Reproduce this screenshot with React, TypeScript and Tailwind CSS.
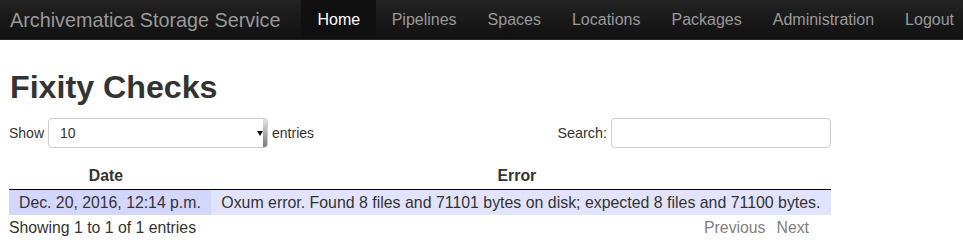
import React from "react";

const navItems = ["Pipelines", "Spaces", "Locations", "Packages", "Administration", "Logout"];

export default function App() {
  return (
    <div className="min-h-[247px] bg-white text-[#333] font-['Liberation_Sans',Arial,sans-serif]">
      <div className="h-[40px] flex items-stretch bg-gradient-to-b from-[#222222] to-[#111111] border-b border-[#252525] whitespace-nowrap overflow-hidden">
        <div className="shrink-0 pl-[10px] pr-[21px] flex items-center text-[19.8px] text-[#999999] leading-[20px] whitespace-nowrap">
          Archivematica Storage Service
        </div>
        <div className="shrink-0 flex items-stretch text-[16px] leading-[20px]">
          <div className="px-[16px] flex items-center bg-[#101010] text-white">Home</div>
          {navItems.map((n) => (
            <div key={n} className="px-[15.5px] flex items-center text-[#999999]">
              {n}
            </div>
          ))}
        </div>
      </div>

      <div className="pl-[9px] w-[840px]">
        <h1 className="mt-[27px] text-[32.2px] leading-[40px] font-bold text-[#333] pl-[1px]">Fixity Checks</h1>

        <div className="mt-[11px] w-[822px] flex items-center justify-between text-[14px] leading-[20px]">
          <div className="flex items-center">
            <span>Show</span>
            <div className="ml-[4px] w-[220px] h-[30px] border border-[#cccccc] rounded-[4px] bg-white flex items-center relative">
              <span className="pl-[11px] text-[14px] text-[#333]">10</span>
              <svg className="absolute left-[208px] top-[12px]" width="6" height="5" viewBox="0 0 6 5">
                <polygon points="0,0 6,0 3,5" fill="#111" />
              </svg>
              <div className="absolute right-0 top-0 bottom-0 w-[4px] bg-gradient-to-b from-[#e6e6e6] to-[#7a7a7a] rounded-r-[3px]" />
            </div>
            <span className="ml-[4px]">entries</span>
          </div>
          <div className="flex items-center">
            <span className="text-[14.4px]">Search:</span>
            <div className="ml-[4px] w-[220px] h-[30px] border border-[#cccccc] rounded-[4px] bg-white" />
          </div>
        </div>

        <table className="mt-[15px] w-[822px] border-collapse text-[15.8px] leading-[19px]">
          <thead>
            <tr className="border-b border-black">
              <th className="w-[201px] pt-[3px] pb-[4px] pl-[10px] pr-[18px] font-bold text-center">Date</th>
              <th className="pt-[3px] pb-[4px] pl-[10px] pr-[18px] font-bold text-center">Error</th>
            </tr>
          </thead>
          <tbody>
            <tr className="bg-[#e2e4ff]">
              <td className="w-[201px] px-[10px] py-[3px] text-center bg-[#d3d6ff] whitespace-nowrap">
                Dec. 20, 2016, 12:14 p.m.
              </td>
              <td className="px-[10px] py-[3px] text-center whitespace-nowrap text-[15.9px]">
                Oxum error. Found 8 files and 71101 bytes on disk; expected 8 files and 71100 bytes.
              </td>
            </tr>
          </tbody>
        </table>

        <div className="w-[822px] flex justify-between text-[15.8px] leading-[19px] pt-[3px]">
          <span>Showing 1 to 1 of 1 entries</span>
          <div className="flex text-[#808080] pr-[22px]">
            <span>Previous</span>
            <span className="ml-[11px]">Next</span>
          </div>
        </div>
      </div>
    </div>
  );
}
